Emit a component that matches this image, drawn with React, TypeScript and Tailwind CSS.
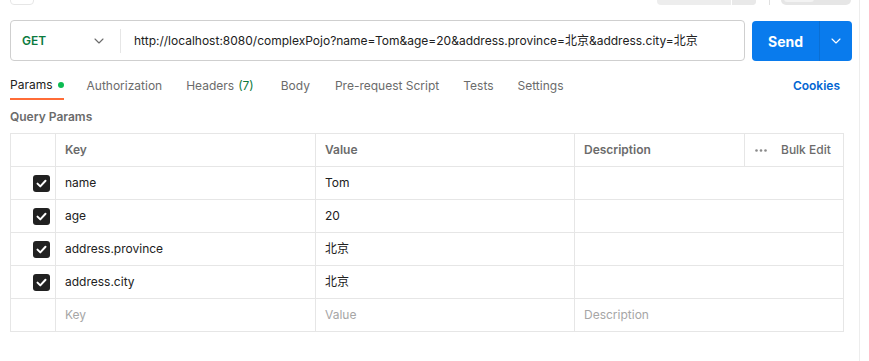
import React from 'react';

const font = { fontFamily: 'Inter, "Noto Sans CJK SC", sans-serif' };

const rows = [
  { key: 'name', value: 'Tom' },
  { key: 'age', value: '20' },
  { key: 'address.province', value: '北京' },
  { key: 'address.city', value: '北京' },
];

function Chevron({ className }: { className?: string }) {
  return (
    <svg width="10" height="6" viewBox="0 0 10 6" className={className} fill="none">
      <path d="M1 1l4 4 4-4" stroke="currentColor" strokeWidth="1.1" strokeLinecap="round" strokeLinejoin="round" />
    </svg>
  );
}

function Checkbox() {
  return (
    <div className="w-[17px] h-[17px] rounded-[3px] bg-[#212121] flex items-center justify-center">
      <svg width="11" height="9" viewBox="0 0 11 9" fill="none">
        <path d="M1.5 4.6l2.8 2.8L9.5 1.8" stroke="white" strokeWidth="2" strokeLinecap="round" strokeLinejoin="round" />
      </svg>
    </div>
  );
}

export default function App() {
  return (
    <div className="w-[869px] h-[361px] bg-white flex overflow-hidden text-[#212121]" style={font}>
      <div className="w-[860px] shrink-0 border-r border-[#ededed] pl-[10px] pr-[7px]">
        {/* toolbar stubs cut off at the top */}
        <div className="h-[5px] flex items-end overflow-hidden">
          <div className="w-[24px] h-[30px] shrink-0 rounded-[4px] border border-[#e6e6e6] bg-white" />
          <div className="ml-auto flex items-end">
            <div className="w-[99px] h-[30px] rounded-[4px] bg-[#ededed] flex overflow-hidden">
              <div className="w-[74px] h-full" />
              <div className="flex-1 h-full bg-[#e9e9e9] border-l border-white" />
            </div>
            <div className="w-px h-[30px] bg-[#e0e0e0] ml-[13px]" />
            <div className="w-[70px] h-[30px] rounded-[5px] bg-[#e6e6e6] ml-[11px] mr-[1px] p-[3px] flex">
              <div className="w-[30px] h-full rounded-[3px] bg-[#f3f3f3]" />
            </div>
          </div>
        </div>

        {/* URL row */}
        <div className="mt-[15px] flex items-start gap-[7px]">
          <div className="w-[736px] h-[41px] border border-[#cfcfcf] rounded-[4px] flex items-center">
            <div className="w-[110px] h-[24px] flex items-center pl-[11px] pr-[16px] border-r border-[#e6e6e6]">
              <span className="text-[12px] font-semibold text-[#0b7a3e]">GET</span>
              <Chevron className="ml-auto text-[#6b6b6b]" />
            </div>
            <span className="ml-[13px] text-[12px] whitespace-nowrap">
              http://localhost:8080/complexPojo?name=Tom&amp;age=20&amp;address.province=北京&amp;address.city=北京
            </span>
          </div>
          <div className="mt-px w-[100px] h-[40px] rounded-[4px] bg-[#097bed] flex items-center text-white">
            <div className="w-[67px] h-full flex items-center justify-center text-[14px] font-bold">Send</div>
            <div className="w-px h-full bg-[#0a6fd4]" />
            <div className="flex-1 flex items-center justify-center">
              <Chevron className="text-white" />
            </div>
          </div>
        </div>

        {/* tabs */}
        <div className="mt-[10px] h-[29px] flex items-stretch text-[12px] text-[#6b6b6b] pr-[12px]">
          <div className="flex flex-col">
            <div className="flex-1 flex items-center text-[#212121]">
              Params
              <span className="ml-[5px] w-[6px] h-[6px] rounded-full bg-[#0cbb52]" />
            </div>
            <div className="h-[2px] bg-[#ff6c37]" />
          </div>
          <div className="ml-[23px] flex items-center">Authorization</div>
          <div className="ml-[24px] flex items-center">
            Headers <span className="ml-[4px] text-[#0b7a3e]">(7)</span>
          </div>
          <div className="ml-[27px] flex items-center">Body</div>
          <div className="ml-[25px] flex items-center">Pre-request Script</div>
          <div className="ml-[24px] flex items-center">Tests</div>
          <div className="ml-[24px] flex items-center">Settings</div>
          <div className="ml-auto flex items-center font-semibold text-[#0265d2]">Cookies</div>
        </div>

        {/* query params */}
        <div className="h-[33px] flex items-center text-[12px] font-semibold text-[#6b6b6b]">Query Params</div>

        <div className="w-[834px] border border-[#e6e6e6] text-[12px]">
          <div className="h-[33px] flex text-[12px] font-semibold text-[#6b6b6b] border-b border-[#e6e6e6]">
            <div className="w-[45px] border-r border-[#e6e6e6]" />
            <div className="w-[260px] border-r border-[#e6e6e6] pl-[9px] flex items-center">Key</div>
            <div className="w-[259px] border-r border-[#e6e6e6] pl-[9px] flex items-center">Value</div>
            <div className="w-[170px] border-r border-[#e6e6e6] pl-[9px] flex items-center">Description</div>
            <div className="flex-1 flex items-center pl-[10px] font-normal">
              <svg width="12" height="3" viewBox="0 0 12 3" fill="#8a8a8a">
                <circle cx="1.5" cy="1.5" r="1.3" />
                <circle cx="6" cy="1.5" r="1.3" />
                <circle cx="10.5" cy="1.5" r="1.3" />
              </svg>
              <span className="ml-[14px] font-medium">Bulk Edit</span>
            </div>
          </div>
          {rows.map((r) => (
            <div key={r.key} className="h-[33px] flex border-b border-[#e6e6e6]">
              <div className="w-[45px] border-r border-[#e6e6e6] flex items-center justify-end pr-[5px]">
                <Checkbox />
              </div>
              <div className="w-[260px] border-r border-[#e6e6e6] pl-[9px] flex items-center">{r.key}</div>
              <div className="w-[259px] border-r border-[#e6e6e6] pl-[9px] flex items-center">{r.value}</div>
              <div className="flex-1" />
            </div>
          ))}
          <div className="h-[32px] flex text-[#a6a6a6]">
            <div className="w-[45px] border-r border-[#e6e6e6]" />
            <div className="w-[260px] border-r border-[#e6e6e6] pl-[9px] flex items-center">Key</div>
            <div className="w-[259px] border-r border-[#e6e6e6] pl-[9px] flex items-center">Value</div>
            <div className="flex-1 pl-[9px] flex items-center">Description</div>
          </div>
        </div>
      </div>
    </div>
  );
}
